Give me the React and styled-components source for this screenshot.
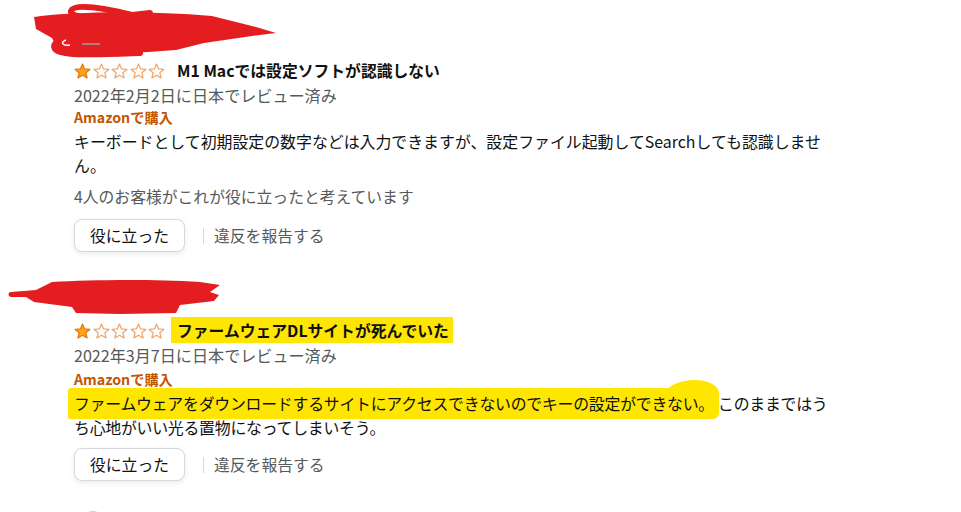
import React from 'react';
import styled, { createGlobalStyle } from 'styled-components';

const GlobalStyle = createGlobalStyle`
  html, body {
    margin: 0;
    padding: 0;
    background: #ffffff;
  }
  body {
    font-family: 'Noto Sans CJK JP', 'Noto Sans', sans-serif;
    color: #0f1111;
  }
`;

const reviews = [
  {
    id: 1,
    scribble: 'first',
    title: 'M1 Macでは設定ソフトが認識しない',
    date: '2022年2月2日に日本でレビュー済み',
    body: [{ text: 'キーボードとして初期設定の数字などは入力できますが、設定ファイル起動してSearchしても認識しませ\nん。' }],
    helpful: '4人のお客様がこれが役に立ったと考えています',
  },
  {
    id: 2,
    scribble: 'second',
    marked: true,
    spacing: -0.25,
    title: 'ファームウェアDLサイトが死んでいた',
    date: '2022年3月7日に日本でレビュー済み',
    body: [
      { text: 'ファームウェアをダウンロードするサイトにアクセスできないのでキーの設定ができない。', mark: true },
      { text: 'このままではう\nち心地がいい光る置物になってしまいそう。' },
    ],
  },
];

function Star({ filled }) {
  return (
    <svg width="17" height="16" viewBox="0 0 24 23">
      <polygon
        points="12,1.5 15,8.6 22.6,9.2 16.8,14.1 18.6,21.5 12,17.5 5.4,21.5 7.2,14.1 1.4,9.2 9,8.6"
        fill={filled ? '#ffa41c' : '#ffffff'}
        stroke={filled ? '#e47911' : '#f0a56a'}
        strokeWidth="1.8"
        strokeLinejoin="round"
      />
    </svg>
  );
}

function Scribble({ kind }) {
  if (kind === 'first') {
    return (
      <svg width="290" height="59" viewBox="0 0 290 59">
        <path
          d="M34,17 C80,11 150,11 212,16 L256,27 L276,33 L252,36 L204,43 L176,50 L120,54 L80,54 L58,49 L52,38 L36,29 Z"
          fill="#e41e20"
        />
        <path
          d="M132,15 C104,8 74,3 71,11 C69,20 112,18 150,13"
          fill="none"
          stroke="#e41e20"
          strokeWidth="6"
          strokeLinecap="round"
        />
        <path
          d="M96,37 C66,35 50,42 55,49 C62,57 100,54 140,53"
          fill="none"
          stroke="#e41e20"
          strokeWidth="6"
          strokeLinecap="round"
        />
        <path d="M66,40 C60,42 62,46 70,45" fill="none" stroke="#ffffff" strokeWidth="1.5" />
        <path d="M82,44 L100,44" stroke="#9aa0a0" strokeWidth="1.5" />
      </svg>
    );
  }
  return (
    <svg width="240" height="49" viewBox="0 0 240 49">
      <path
        d="M12,22 C20,21 28,21 36,20 L52,12 C90,10 150,9 200,12 L220,15 L210,22 L219,25 L214,31 L180,35 L176,43 L120,44 L76,43 L72,37 L34,32 L26,27 L11,27 Z"
        fill="#e41e20"
      />
      <path d="M11,24.5 L40,24" stroke="#e41e20" strokeWidth="5" strokeLinecap="round" />
    </svg>
  );
}

export default function App() {
  return (
    <>
      <GlobalStyle />
      <Page>
        {reviews.map((r) => (
          <Review key={r.id}>
            <Profile $height={r.id === 1 ? 59 : 49}>
              <Scribble kind={r.scribble} />
            </Profile>
            <Content>
              <TitleRow>
                <Stars>
                  {[0, 1, 2, 3, 4].map((i) => (
                    <Star key={i} filled={i === 0} />
                  ))}
                </Stars>
                <Title>{r.marked ? <TitleMark>{r.title}</TitleMark> : r.title}</Title>
              </TitleRow>
              <DateLine>{r.date}</DateLine>
              <Verified $top={r.helpful ? 0 : 2}>Amazonで購入</Verified>
              <Body $spacing={r.spacing || 0}>
                {r.body.map((part, i) =>
                  part.mark ? <BodyMark key={i}>{part.text}</BodyMark> : <span key={i}>{part.text}</span>
                )}
              </Body>
              {r.helpful && <Helpful>{r.helpful}</Helpful>}
              <Actions $top={r.helpful ? 10 : 8}>
                <HelpButton>役に立った</HelpButton>
                <Divider />
                <ReportLink>違反を報告する</ReportLink>
              </Actions>
            </Content>
          </Review>
        ))}
        <NextReview>
          <Avatar />
        </NextReview>
      </Page>
    </>
  );
}

const Page = styled.div`
  width: 961px;
  height: 512px;
  overflow: hidden;
  display: flex;
  flex-direction: column;
  gap: 18px;
`;

const Review = styled.div`
  display: flex;
  flex-direction: column;
`;

const Profile = styled.div`
  height: ${(p) => p.$height}px;
  display: flex;
  align-items: flex-start;
  svg {
    display: block;
  }
`;

const Content = styled.div`
  padding-left: 74px;
  display: flex;
  flex-direction: column;
`;

const TitleRow = styled.div`
  height: 24px;
  display: flex;
  align-items: center;
  gap: 12px;
`;

const Stars = styled.div`
  display: flex;
  gap: 1.5px;
  margin-top: -1px;
  svg {
    display: block;
  }
`;

const Title = styled.div`
  font-size: 15.8px;
  font-weight: 700;
  line-height: 24px;
  color: #0f1111;
  white-space: nowrap;
`;

const TitleMark = styled.span`
  background: #ffe600;
  padding: 2px 4px 1px 6px;
  margin-left: -6px;
`;

const DateLine = styled.div`
  font-size: 16.1px;
  line-height: 24px;
  color: #565959;
`;

const Verified = styled.div`
  margin-top: ${(p) => p.$top}px;
  font-size: 14.2px;
  font-weight: 700;
  line-height: 20px;
  color: #c45500;
`;

const Body = styled.div`
  position: relative;
  z-index: 0;
  margin-top: 3px;
  width: 780px;
  font-size: 15.9px;
  letter-spacing: ${(p) => p.$spacing}px;
  line-height: 24px;
  color: #0f1111;
  white-space: pre-line;
`;

const BodyMark = styled.span`
  position: relative;
  background: #ffe600;
  padding: 4px 5px 4px 6px;
  margin: 0 -1px 0 -6px;
  border-radius: 3px 10px 6px 2px;

  &::after {
    content: '';
    position: absolute;
    right: 0;
    top: -8px;
    width: 54px;
    height: 22px;
    background: #ffe600;
    border-radius: 55% 45% 0 0 / 70% 60% 0 0;
    z-index: -1;
  }
`;

const Helpful = styled.div`
  margin-top: 7px;
  font-size: 15.8px;
  line-height: 24px;
  color: #565959;
`;

const Actions = styled.div`
  margin-top: ${(p) => p.$top}px;
  display: flex;
  align-items: center;
`;

const HelpButton = styled.div`
  box-sizing: border-box;
  width: 111px;
  height: 33px;
  display: flex;
  align-items: center;
  justify-content: center;
  border: 1px solid #d5d9d9;
  border-radius: 8px;
  box-shadow: 0 2px 5px rgba(213, 217, 217, 0.5);
  font-size: 15.8px;
  color: #0f1111;
  background: #ffffff;
`;

const Divider = styled.div`
  width: 1px;
  height: 16px;
  background: #d5d9d9;
  margin: 0 10px 0 18px;
`;

const ReportLink = styled.div`
  font-size: 15.8px;
  line-height: 24px;
  color: #565959;
`;

const NextReview = styled.div`
  padding: 12px 0 0 80px;
`;

const Avatar = styled.div`
  width: 24px;
  height: 24px;
  border-radius: 50%;
  border: 1px solid #c7c9c9;
  background: #f0f2f2;
`;
